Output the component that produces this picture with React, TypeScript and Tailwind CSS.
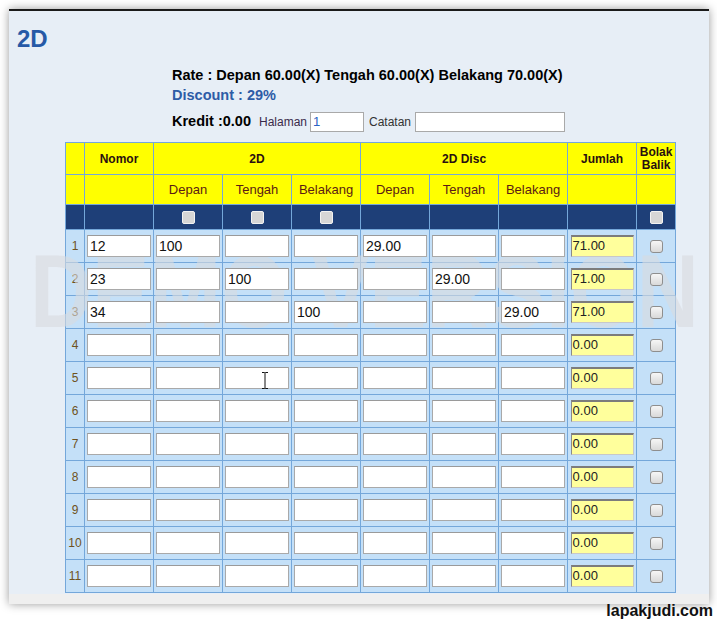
import React from 'react';

type Row = {
  no: number;
  vals: string[];
  jumlah: string;
};

const rows: Row[] = [
  { no: 1, vals: ['12', '100', '', '', '29.00', '', ''], jumlah: '71.00' },
  { no: 2, vals: ['23', '', '100', '', '', '29.00', ''], jumlah: '71.00' },
  { no: 3, vals: ['34', '', '', '100', '', '', '29.00'], jumlah: '71.00' },
  ...[4, 5, 6, 7, 8, 9, 10, 11].map((n) => ({
    no: n,
    vals: ['', '', '', '', '', '', ''],
    jumlah: '0.00',
  })),
];

function Box({ dark }: { dark?: boolean }) {
  return (
    <span
      className={
        dark
          ? 'inline-block w-[13px] h-[13px] rounded-[2px] border border-[#f2f2f2] bg-[#d6d6d6] align-middle'
          : 'relative z-[2] inline-block w-[13px] h-[13px] rounded-[3px] border border-[#8e8e8e] bg-gradient-to-b from-[#f6f6f6] to-[#d9d9d9] align-middle'
      }
    />
  );
}

function Field({ value }: { value: string }) {
  return (
    <div className="relative z-[2] w-[64px] h-[22px] bg-white border border-[#a9a9a9] border-t-[#9a9a9a] px-[2px] text-[14px] leading-[20px] text-[#111] mx-auto">
      {value}
    </div>
  );
}

export default function App() {
  const th1 = 'border border-[#74a7da] bg-[#ffff00] h-[32px] text-[12px] font-bold text-[#2a1010] text-center p-0';
  const th2 = 'border border-[#74a7da] bg-[#ffff00] h-[30px] text-[13px] font-normal text-[#5a1a14] text-center p-0';
  const dk = 'border border-[#74a7da] p-0';
  const td = 'border border-[#74a7da] p-0 h-[33px]';

  return (
    <div className="w-[717px] h-[620px] bg-white relative" style={{ fontFamily: '"Liberation Sans", Arial, sans-serif' }}>
      <div className="absolute left-[9px] top-[9px] w-[700px] bg-[#e7eef6] border-t-2 border-[#1a1a1a] shadow-[0_0_9px_rgba(0,0,0,0.4)]">
        <div className="pt-[14px] pl-[8px]">
          <div className="text-[24px] leading-[28px] font-bold text-[#2659a6]">2D</div>
        </div>

        <div className="pl-[163px] mt-[12px]">
          <div className="text-[14.5px] leading-[20px] font-bold text-black">
            Rate : Depan 60.00(X) Tengah 60.00(X) Belakang 70.00(X)
          </div>
          <div className="text-[14.5px] leading-[20px] font-bold text-[#2d5ca6]">Discount : 29%</div>
          <div className="flex items-center h-[20px] mt-[7px]">
            <span className="text-[14.5px] font-bold text-black">Kredit :0.00</span>
            <span className="ml-[8px] text-[12px] text-[#3a2a4a]">Halaman</span>
            <div className="ml-[3px] w-[54px] h-[20px] bg-white border border-[#a9a9a9] px-[2px] text-[13px] leading-[18px] text-[#2a63c4]">
              1
            </div>
            <span className="ml-[5px] text-[12px] text-[#333]">Catatan</span>
            <div className="ml-[4px] w-[150px] h-[20px] bg-white border border-[#a9a9a9]" />
          </div>
        </div>

        <div className="relative ml-[56px] mt-[10px] w-[610px]">
          <table className="table-fixed border-collapse w-[610px]">
            <colgroup>
              <col className="w-[19px]" />
              <col className="w-[69px]" />
              <col className="w-[69px]" />
              <col className="w-[69px]" />
              <col className="w-[69px]" />
              <col className="w-[69px]" />
              <col className="w-[69px]" />
              <col className="w-[69px]" />
              <col className="w-[69px]" />
              <col className="w-[39px]" />
            </colgroup>
            <thead>
              <tr>
                <th className={th1} />
                <th className={th1}>Nomor</th>
                <th className={th1} colSpan={3}>2D</th>
                <th className={th1} colSpan={3}>2D Disc</th>
                <th className={th1}>Jumlah</th>
                <th className={th1 + ' leading-[13px]'}>
                  Bolak
                  <br />
                  Balik
                </th>
              </tr>
              <tr>
                <th className={th2} />
                <th className={th2} />
                <th className={th2}>Depan</th>
                <th className={th2}>Tengah</th>
                <th className={th2}>Belakang</th>
                <th className={th2}>Depan</th>
                <th className={th2}>Tengah</th>
                <th className={th2}>Belakang</th>
                <th className={th2} />
                <th className={th2} />
              </tr>
              <tr className="bg-[#1e3f78]">
                <th className={dk + ' h-[24px]'} />
                <th className={dk} />
                <th className={dk}><Box dark /></th>
                <th className={dk}><Box dark /></th>
                <th className={dk}><Box dark /></th>
                <th className={dk} />
                <th className={dk} />
                <th className={dk} />
                <th className={dk} />
                <th className={dk}><Box dark /></th>
              </tr>
            </thead>
            <tbody className="bg-[#c4e0f8]">
              {rows.map((r) => (
                <tr key={r.no}>
                  <td className={td + ' text-[12px] text-[#6e5220] text-center'}>{r.no}</td>
                  {r.vals.map((v, i) => (
                    <td key={i} className={td}>
                      <Field value={v} />
                    </td>
                  ))}
                  <td className={td}>
                    <div className="relative z-[2] w-[63px] h-[22px] bg-[#ffff9c] border border-[#c8c8c8] border-t-[#7c7c7c] border-l-[#8a8a8a] border-t-2 pl-[1px] text-[13px] leading-[18px] text-[#222] mx-auto">
                      {r.jumlah}
                    </div>
                  </td>
                  <td className={td + ' text-center'}>
                    <Box />
                  </td>
                </tr>
              ))}
            </tbody>
          </table>

          {/* watermark: above the cell colour, below the inputs */}
          <div className="absolute z-[1] left-[-35px] top-[106px] w-[660px] text-center text-[86px] leading-[86px] font-bold text-[rgba(216,219,224,0.6)] scale-y-[1.2] whitespace-nowrap pointer-events-none select-none">
            DEMO VERSION
          </div>

          {/* mouse cursor */}
          <svg className="absolute z-[3] left-[196px] top-[230px]" width="8" height="17" viewBox="0 0 8 17">
            <path d="M1 0.5h2.5l0.5 0.5 0.5-0.5h2.5M4 1v15M1 16.5h2.5l0.5-0.5 0.5 0.5h2.5" stroke="#111" strokeWidth="1" fill="none" />
          </svg>
        </div>

        <div className="h-[10px] mt-[1px] bg-[#efefef]" />
      </div>

      <div className="absolute right-[4px] top-[602px] text-[16px] leading-[18px] font-bold text-[#111]">
        lapakjudi.com
      </div>
    </div>
  );
}
